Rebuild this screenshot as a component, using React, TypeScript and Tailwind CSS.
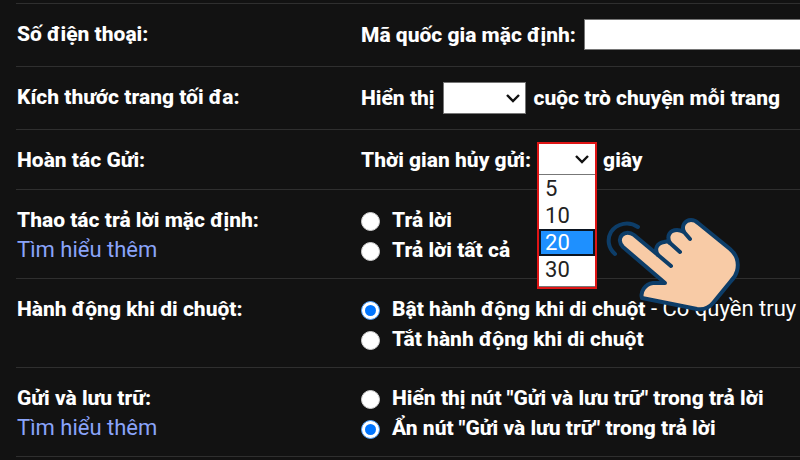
import { useState, type ReactNode } from "react";

const UNDO_SECONDS = [5, 10, 20, 30];

type RowProps = {
  label: string;
  htmlFor?: string;
  learnMore?: boolean;
  spacing?: string;
  children: ReactNode;
};

function SettingRow({ label, htmlFor, learnMore, spacing = "pt-[15px] pb-[13px]", children }: RowProps) {
  return (
    <section
      className={`grid grid-cols-[344px_minmax(0,1fr)] items-start border-t border-[#2f2f2f] pl-px ${spacing}`}
    >
      <div>
        {htmlFor ? (
          <label htmlFor={htmlFor} className="block font-extrabold">
            {label}
          </label>
        ) : (
          <h2 className="font-extrabold">{label}</h2>
        )}
        {learnMore && (
          <a href="#help" className="text-[22px] text-[#8aa4fa]">
            Tìm hiểu thêm
          </a>
        )}
      </div>
      {children}
    </section>
  );
}

type RadioOption = { label: string; note?: string };

function RadioList({
  name,
  options,
  initial,
}: {
  name: string;
  options: RadioOption[];
  initial?: number;
}) {
  const [selected, setSelected] = useState(initial);

  return (
    <div role="radiogroup">
      {options.map((option, index) => (
        <label key={option.label} className="flex h-[30px] items-center gap-3 whitespace-nowrap">
          <input
            type="radio"
            name={name}
            checked={selected === index}
            onChange={() => setSelected(index)}
            className="mt-0.5 grid size-[19px] shrink-0 appearance-none place-items-center rounded-full border border-[#d0d0d0] bg-white before:size-[11px] before:rounded-full checked:border-[#4a9fff] checked:before:bg-[#0075ff]"
          />
          <span>
            <span className="font-extrabold">{option.label}</span>
            {option.note && <span className="text-[22px]">{option.note}</span>}
          </span>
        </label>
      ))}
    </div>
  );
}

function Chevron() {
  return (
    <svg
      viewBox="0 0 14 10"
      className="pointer-events-none col-start-1 row-start-1 mr-1.5 h-2.5 w-3.5 self-center justify-self-end"
      aria-hidden="true"
    >
      <path d="M1 2l6 6 6-6" fill="none" stroke="#111" strokeWidth="2.4" />
    </svg>
  );
}

function UndoSelect() {
  const [seconds, setSeconds] = useState(20);

  return (
    <div className="relative h-[30px] w-[60px] shrink-0">
      <div className="absolute inset-x-0 -top-[3px] z-10 border-2 border-[#df1515] bg-white text-[#222]">
        <div className="grid h-[31px] border-b border-[#777]">
          <select
            id="undo"
            className="col-start-1 row-start-1 w-full appearance-none bg-white outline-none"
          >
            <option value=""></option>
          </select>
          <Chevron />
        </div>
        <div role="listbox" aria-label="Thời gian hủy gửi" className="border-b border-[#777] pb-[3px]">
          {UNDO_SECONDS.map((value) => (
            <button
              key={value}
              type="button"
              role="option"
              aria-selected={value === seconds}
              onClick={() => setSeconds(value)}
              className={`block h-[27px] w-full border-2 pl-1 text-left text-[22px] leading-[23px] ${
                value === seconds
                  ? "border-[#0b1420] bg-[#1e90ff] text-white"
                  : "border-transparent"
              }`}
            >
              {value}
            </button>
          ))}
        </div>
      </div>
    </div>
  );
}

function PointingHand() {
  return (
    <svg
      viewBox="0 0 150 130"
      className="pointer-events-none absolute top-[200px] left-[600px] z-20 h-[130px] w-[150px]"
      fill="none"
      stroke="#0d3d68"
      strokeWidth="4"
      strokeLinecap="round"
      strokeLinejoin="round"
      aria-hidden="true"
    >
      <path d="M38 27C29 21 17 23 11 32C7 39 8 48 15 54" />
      <path
        fill="#f8cba6"
        d="M65 83L23 47C19 43 19 38 22 35C25 32 30 32 34 35L58 55C54 49 57 43 64 42C67 41 69 42 70 43C66 36 70 30 77 30C80 30 82 31 84 32C81 26 85 20 91 20C94 20 96 21 98 23L130 49C137 55 139 63 137 71C136 75 134 78 131 81L113 103C109 108 104 110 97 109L42 98C40 92 45 84 53 83Z"
      />
      <path d="M58 55L71 66M70 43L80 52M84 32L90 39" />
    </svg>
  );
}

export default function App() {
  return (
    <main className="relative min-h-screen overflow-hidden bg-[#121212] pt-[3px] pl-4 font-[Roboto,'Noto_Sans',sans-serif] text-[21px] leading-[30px] text-white">
      <SettingRow label="Số điện thoại:" spacing="pt-[15px] pb-4">
        <div className="flex items-center gap-2">
          <label htmlFor="country" className="font-extrabold whitespace-nowrap">
            Mã quốc gia mặc định:
          </label>
          <input
            id="country"
            type="text"
            className="h-[31px] min-w-0 flex-1 border border-r-0 border-[#767676] bg-white px-1 text-[#222]"
          />
        </div>
      </SettingRow>

      <SettingRow label="Kích thước trang tối đa:" htmlFor="page-size" spacing="pt-[15px] pb-4">
        <div className="flex items-center gap-2 font-extrabold whitespace-nowrap">
          Hiển thị
          <div className="grid h-[31px] w-[83px]">
            <select
              id="page-size"
              className="col-start-1 row-start-1 appearance-none border border-[#767676] bg-white text-[#222]"
            >
              <option value=""></option>
            </select>
            <Chevron />
          </div>
          cuộc trò chuyện mỗi trang
        </div>
      </SettingRow>

      <SettingRow label="Hoàn tác Gửi:" htmlFor="undo" spacing="pt-[15px] pb-[14px]">
        <div className="flex items-center gap-1.5 whitespace-nowrap">
          <span className="font-extrabold">Thời gian hủy gửi:</span>
          <UndoSelect />
          <span className="font-extrabold">giây</span>
        </div>
      </SettingRow>

      <SettingRow label="Thao tác trả lời mặc định:" learnMore>
        <RadioList name="reply" options={[{ label: "Trả lời" }, { label: "Trả lời tất cả" }]} />
      </SettingRow>

      <SettingRow label="Hành động khi di chuột:">
        <RadioList
          name="hover"
          initial={0}
          options={[
            { label: "Bật hành động khi di chuột", note: " - Có quyền truy" },
            { label: "Tắt hành động khi di chuột" },
          ]}
        />
      </SettingRow>

      <SettingRow label="Gửi và lưu trữ:" learnMore>
        <RadioList
          name="archive"
          initial={1}
          options={[
            { label: 'Hiển thị nút "Gửi và lưu trữ" trong trả lời' },
            { label: 'Ẩn nút "Gửi và lưu trữ" trong trả lời' },
          ]}
        />
      </SettingRow>

      <hr className="border-[#2f2f2f]" />
      <PointingHand />
    </main>
  );
}
